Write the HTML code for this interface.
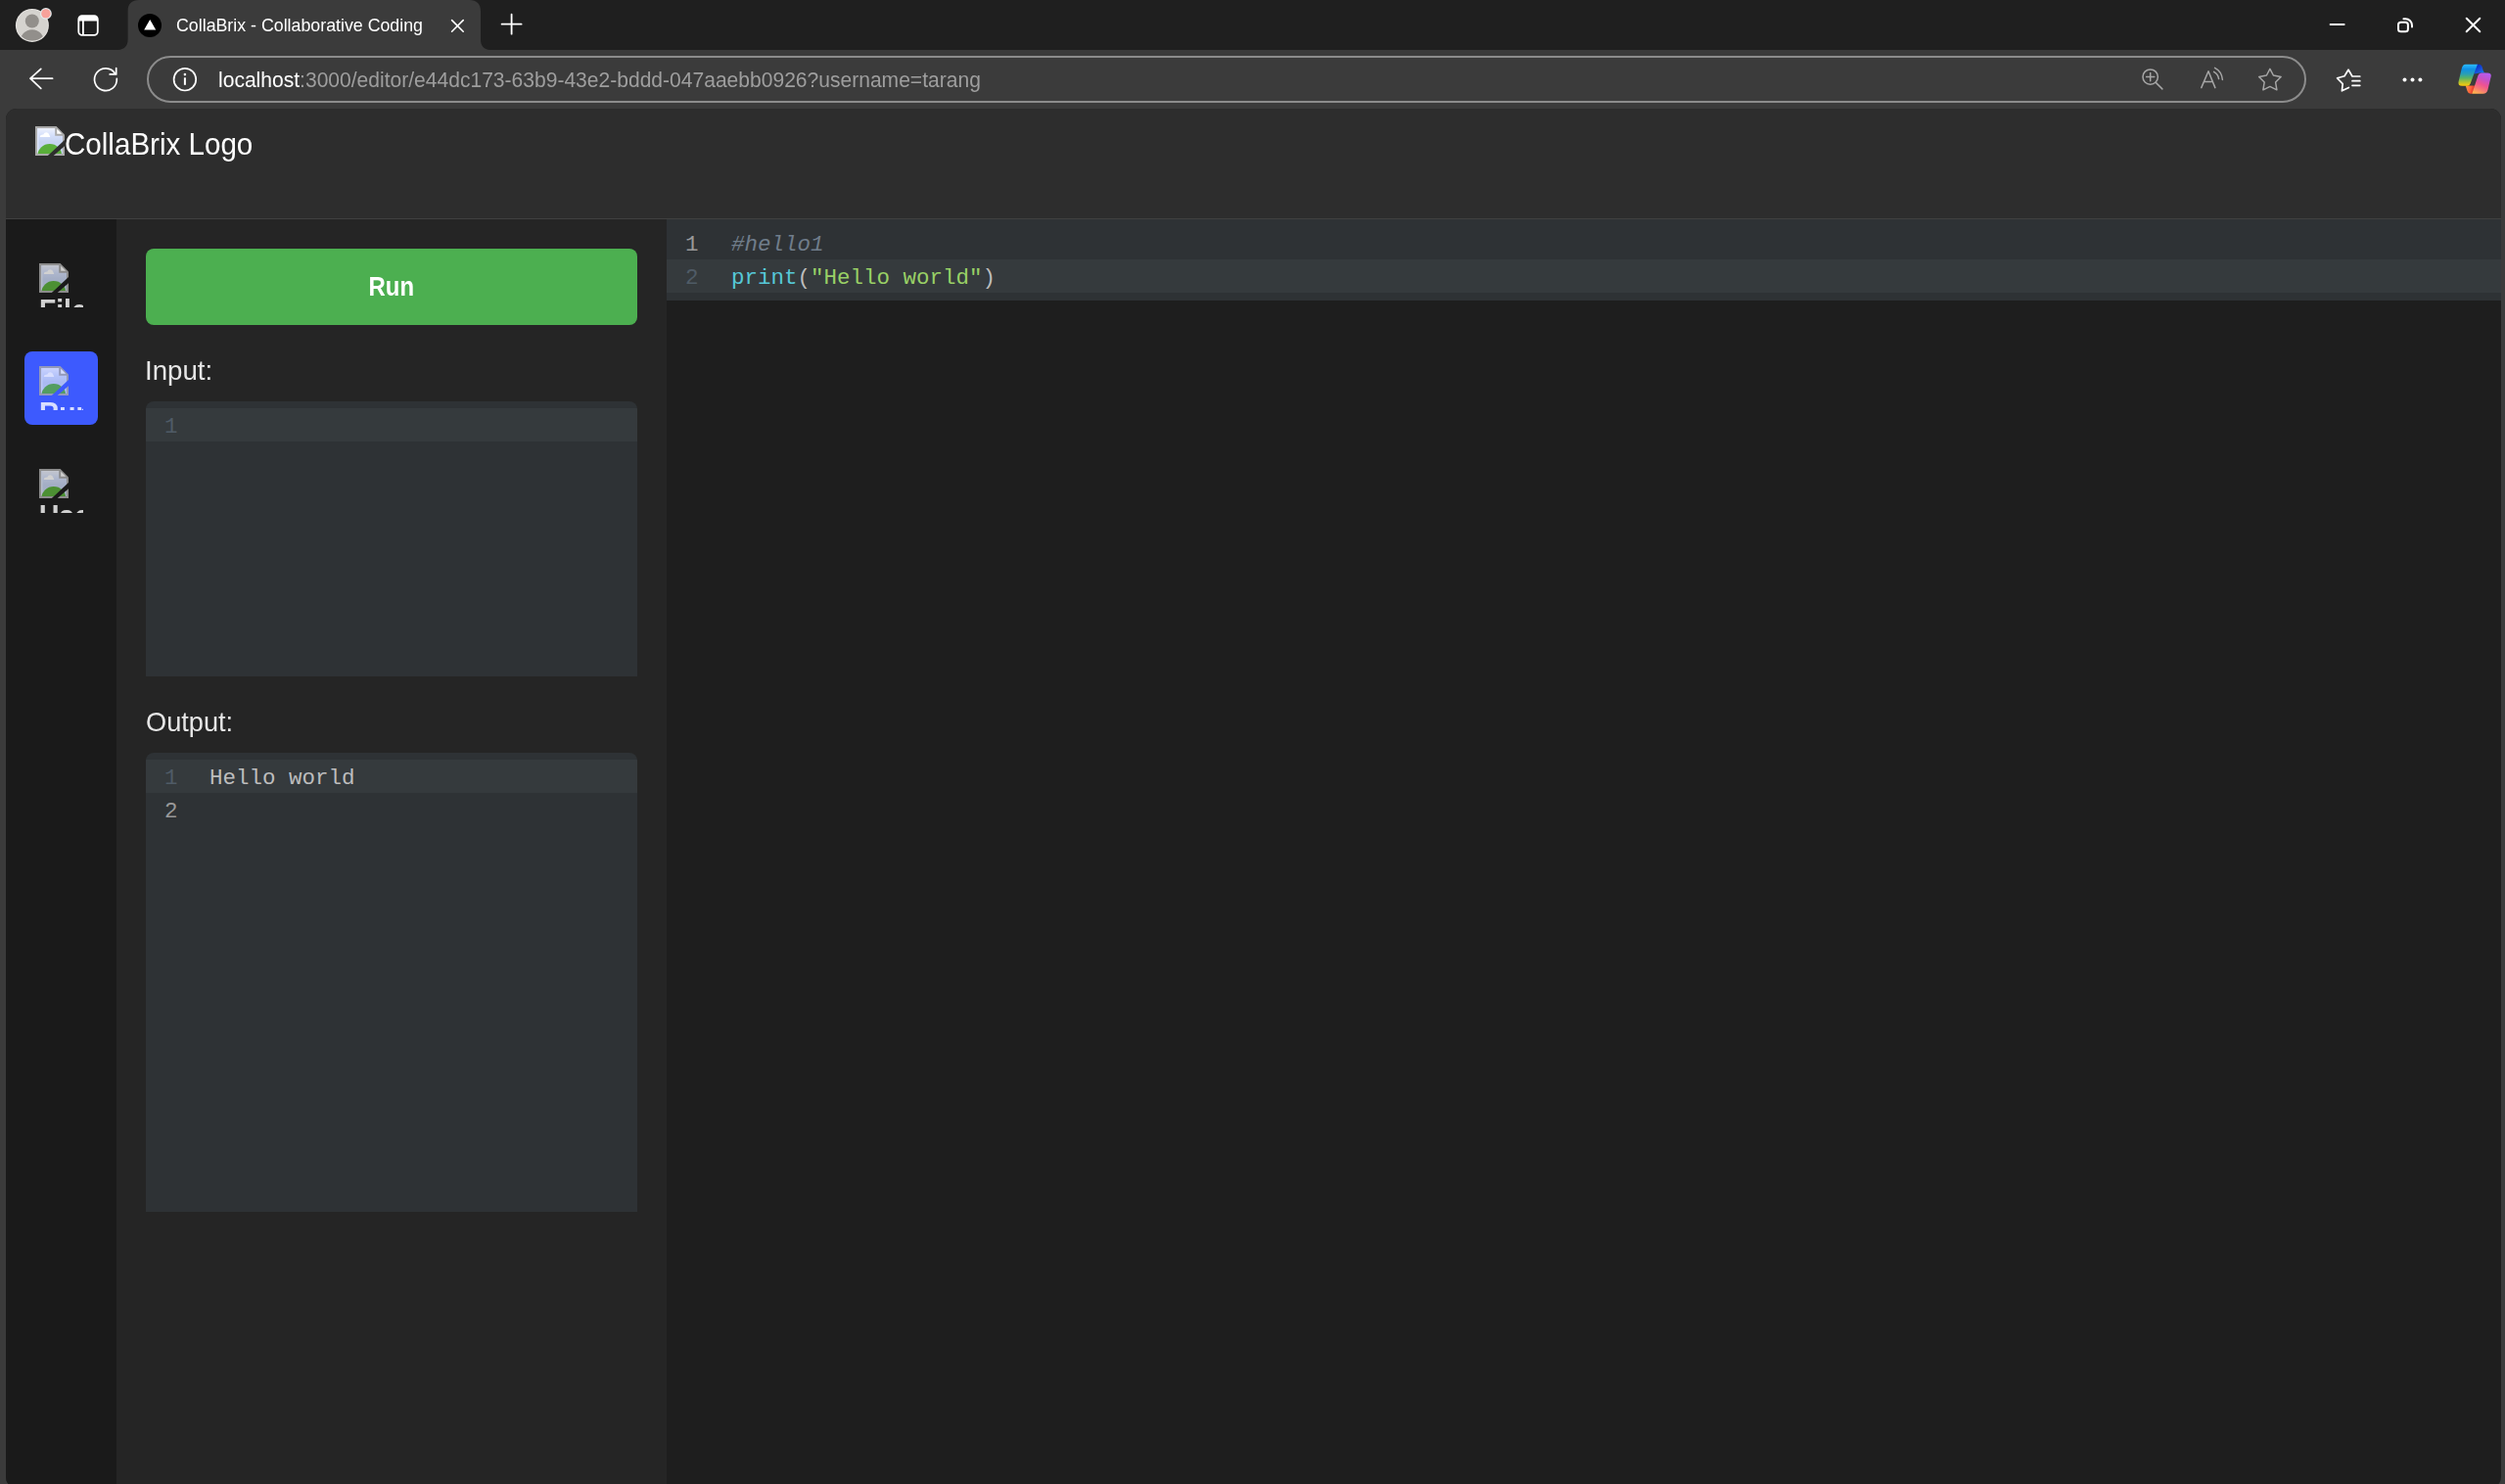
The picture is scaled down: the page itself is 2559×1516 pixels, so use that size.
<!DOCTYPE html>
<html>
<head>
<meta charset="utf-8">
<title>CollaBrix - Collaborative Coding</title>
<style>
html,body{margin:0;padding:0;}
html{width:2559px;height:1516px;overflow:hidden;}
body{width:2559px;height:1516px;overflow:hidden;position:relative;background:#3b3b3b;font-family:"Liberation Sans",sans-serif;color:#fff;}
.a{position:absolute;}
svg{position:absolute;overflow:visible;}
/* ---------- browser chrome ---------- */
#tabstrip{left:0;top:0;width:2559px;height:51px;background:#1f1f1f;}
#tabtitle{left:180px;top:14px;font-size:18.5px;line-height:24px;color:#fff;white-space:nowrap;transform-origin:0 0;transform:scaleX(.961);}
#pill{left:150px;top:57px;width:2202px;height:43.5px;border:2px solid #8c8c8c;border-radius:24px;background:#3b3b3b;}
#url{left:223px;top:68px;font-size:21.4px;line-height:28px;color:#9e9e9e;white-space:nowrap;transform-origin:0 0;transform:scaleX(.984);}
#url b{font-weight:normal;color:#fff;}
/* ---------- page ---------- */
#page{left:6px;top:111px;width:2548.5px;height:1405px;overflow:hidden;}
#pagein{left:0;top:0;width:2548.5px;height:1409px;border-radius:11px;overflow:hidden;background:#1e1e1e;}
#hdr{left:0;top:0;width:2549px;height:112px;background:#2d2d2d;border-bottom:2px solid #404040;}
#logotxt{left:60px;top:16px;font-size:32px;line-height:40px;white-space:nowrap;color:#fff;transform-origin:0 0;transform:scaleX(.924);}
#side{left:0;top:113px;width:113px;height:1320px;background:#1a1a1a;}
.sb{left:19px;width:75px;height:75px;border-radius:8px;}
.sb .ic{left:15px;top:15px;width:45px;height:45px;overflow:hidden;opacity:.8;}
.sb .alt{left:0;top:31.7px;font-weight:bold;font-size:31px;line-height:34px;white-space:nowrap;color:#fff;transform-origin:0 0;transform:scaleX(.91);}
#panel{left:113px;top:113px;width:562px;height:1320px;background:#252525;}
#run{left:30px;top:30px;width:502px;height:78px;border-radius:8px;background:#4caf50;color:#fff;font-weight:bold;font-size:27.6px;line-height:78px;text-align:center;}
#run span{display:inline-block;transform:scaleX(.867);}
.lbl{left:30px;font-size:27.8px;line-height:32px;color:#e6e6e6;white-space:nowrap;transform-origin:0 0;}
.box{left:30px;width:502px;background:#2e3235;border-radius:8px 8px 0 0;overflow:hidden;}
.ln{left:0;width:100%;height:34px;}
.act{background:#353a3d;}
.mono{font-family:"Liberation Mono",monospace;font-size:22.5px;line-height:34px;white-space:pre;margin-top:2px;}
.num{color:#999;}
.numa{color:#4f5b66;}
#ed{left:675px;top:113px;width:1874px;height:83px;background:#2e3235;}
</style>
</head>
<body>

<!-- ================= TAB STRIP ================= -->
<div id="tabstrip" class="a"></div>
<svg id="tabshape" style="left:0;top:0" width="2559" height="51" viewBox="0 0 2559 51">
  <path d="M120.5 51 C127 50.6 130.6 47 130.6 40.5 V11.5 C130.6 4 134.5 0 142 0 H479.6 C487 0 491 4 491 11.5 V40.5 C491 47 494.5 50.6 500.5 51 Z" fill="#3b3b3b"/>
</svg>
<div id="tabtitle" class="a">CollaBrix - Collaborative Coding</div>

<!-- ================= TOOLBAR ================= -->
<div id="pill" class="a"></div>
<div id="url" class="a"><b>localhost</b>:3000/editor/e44dc173-63b9-43e2-bddd-047aaebb0926?username=tarang</div>


<!-- ================= CHROME ICONS ================= -->
<svg id="chromeicons" style="left:0;top:0" width="2559" height="111" viewBox="0 0 2559 111" fill="none">
  <defs>
    <clipPath id="avc"><circle cx="32.9" cy="25.9" r="15.6"/></clipPath>
    <linearGradient id="cpL" x1="0" y1="65.8" x2="0" y2="87.8" gradientUnits="userSpaceOnUse">
      <stop offset="0" stop-color="#2cbcff"/><stop offset=".22" stop-color="#0f90e6"/><stop offset=".45" stop-color="#2a9fb4"/><stop offset=".62" stop-color="#55b268"/><stop offset=".8" stop-color="#a6c038"/><stop offset=".93" stop-color="#e2c816"/><stop offset="1" stop-color="#ffc80a"/>
    </linearGradient>
    <linearGradient id="cpR" x1="2540" y1="74.4" x2="2531" y2="95.8" gradientUnits="userSpaceOnUse">
      <stop offset="0" stop-color="#b35cf2"/><stop offset=".3" stop-color="#c652c6"/><stop offset=".55" stop-color="#ee5292"/><stop offset=".78" stop-color="#f67a74"/><stop offset="1" stop-color="#ffb050"/>
    </linearGradient>
    <linearGradient id="cpT" x1="2531" y1="66" x2="2537" y2="75" gradientUnits="userSpaceOnUse">
      <stop offset="0" stop-color="#0a2cc2"/><stop offset=".6" stop-color="#1a55dc"/><stop offset="1" stop-color="#0f86f0"/>
    </linearGradient>
    <linearGradient id="cpB" x1="2519" y1="90" x2="2527.5" y2="92" gradientUnits="userSpaceOnUse">
      <stop offset="0" stop-color="#ff9448"/><stop offset=".6" stop-color="#fb5c38"/><stop offset="1" stop-color="#d8302a"/>
    </linearGradient>
  </defs>

  <!-- profile avatar -->
  <circle cx="32.9" cy="25.9" r="17" fill="#e4e2df"/>
  <circle cx="32.9" cy="25.9" r="15.8" fill="#d5d3cf"/>
  <g clip-path="url(#avc)">
    <circle cx="32.8" cy="21.5" r="7" fill="#928f8b"/>
    <ellipse cx="32.8" cy="43.3" rx="12.6" ry="13" fill="#928f8b"/>
  </g>
  <circle cx="46.9" cy="13.9" r="5.9" fill="#e3ecee"/>
  <circle cx="46.9" cy="13.9" r="4.7" fill="#f7a19a"/>

  <!-- tab actions -->
  <rect x="80.3" y="16.1" width="19.5" height="19.7" rx="3.6" stroke="#fff" stroke-width="1.8"/>
  <path d="M80.3 21.4V19.7a3.6 3.6 0 0 1 3.6-3.6h12.3a3.6 3.6 0 0 1 3.6 3.6V21.4Z" fill="#fff"/>
  <path d="M84.9 21V35.6" stroke="#fff" stroke-width="1.8"/>

  <!-- favicon -->
  <circle cx="153" cy="25.9" r="12" fill="#000"/>
  <path d="M153.2 20L159.2 30.4H147.2Z" fill="#fff"/>

  <!-- tab close -->
  <path d="M461.6 20.6L473.2 32.2M473.2 20.6L461.6 32.2" stroke="#fff" stroke-width="1.6" stroke-linecap="round"/>
  <!-- new tab -->
  <path d="M512.6 24.7H532.6M522.6 14.7V34.7" stroke="#fff" stroke-width="1.8" stroke-linecap="round"/>

  <!-- window controls -->
  <path d="M2380.6 25H2394.6" stroke="#fff" stroke-width="2" stroke-linecap="round"/>
  <rect x="2450" y="22.7" width="9.9" height="9.6" rx="2.6" stroke="#fff" stroke-width="2"/>
  <path d="M2455.4 19.3H2457.4a6.6 6.6 0 0 1 6.6 6.6V27.6" stroke="#fff" stroke-width="2" stroke-linecap="round"/>
  <path d="M2519.7 18.7L2533.3 32.3M2533.3 18.7L2519.7 32.3" stroke="#fff" stroke-width="2" stroke-linecap="round"/>

  <!-- back -->
  <path d="M53.6 80.2H31M41.8 70.3L31 80.2L41.8 90.4" stroke="#fff" stroke-width="1.7" stroke-linecap="round" stroke-linejoin="round"/>
  <!-- refresh -->
  <path d="M119.3 80.4A11.4 11.4 0 1 1 117.6 75.2" stroke="#fff" stroke-width="1.7" stroke-linecap="round"/>
  <path d="M118.7 69.6V75.9H112.2" stroke="#fff" stroke-width="1.7" stroke-linecap="round" stroke-linejoin="round"/>
  <!-- info -->
  <circle cx="188.9" cy="81.2" r="11.3" stroke="#fff" stroke-width="1.7"/>
  <circle cx="188.9" cy="76.1" r="1.3" fill="#fff"/>
  <path d="M188.9 79.3V86.8" stroke="#fff" stroke-width="2" stroke-linecap="butt"/>

  <!-- zoom -->
  <g stroke="#a6a6a6" stroke-width="1.5" stroke-linecap="round" stroke-linejoin="round">
    <circle cx="2196.7" cy="78.6" r="7.7"/>
    <path d="M2192.6 78.6H2200.8M2196.7 74.6V82.7M2202.3 84.4L2208.9 90.9"/>
    <!-- read aloud -->
    <path d="M2248.8 89.6L2256 72.8L2262.9 89.6M2251.6 83.6H2260.3"/>
    <path d="M2261.6 73.4Q2266 76 2266.6 80.6M2262.6 69.4Q2269.6 73 2270.4 81.4"/>
    <!-- star -->
    <path d="M2318.9 70.4L2322.4 77L2330.1 78.5L2324.6 84L2325.9 91.8L2318.9 88.4L2311.9 91.8L2313.2 84L2307.7 78.5L2315.4 77Z"/>
  </g>

  <!-- favorites -->
  <g stroke="#fff" stroke-width="1.7" stroke-linecap="round" stroke-linejoin="round">
    <path d="M2410.8 78H2403L2399 71.2L2395 77.8L2387.6 79.8L2393.2 85.6L2392.4 92.8L2399.4 89.4"/>
    <path d="M2403 82.7H2410.8M2403 87.3H2410.8"/>
  </g>
  <!-- dots -->
  <circle cx="2456.5" cy="81.6" r="2" fill="#fff"/><circle cx="2464.5" cy="81.6" r="2" fill="#fff"/><circle cx="2472.4" cy="81.6" r="2" fill="#fff"/>

  <!-- copilot -->
  <path d="M2529.6 65.8H2532.4Q2535 65.8 2535.8 68.8L2536.7 72.2Q2537.3 74.4 2539.8 74.4H2533L2527.4 75.4Z" fill="url(#cpT)"/>
  <path d="M2518.8 87.4H2528.6L2525.6 95.8H2523.8Q2521.4 95.8 2520.5 93Z" fill="url(#cpB)"/>
  <path d="M2518.8 65.8H2530.9L2523.7 85.2Q2522.8 87.8 2520.2 87.8H2515.2Q2510.5 87.8 2511.6 83.2L2514.7 70.2Q2515.8 65.8 2518.8 65.8Z" fill="url(#cpL)"/>
  <path d="M2534.8 74.4H2541.2Q2545.5 74.4 2544.6 78.4L2541.5 91.4Q2540.3 95.8 2536.6 95.8H2525.3L2531.5 77Q2532.3 74.4 2534.8 74.4Z" fill="url(#cpR)"/>
</svg>


<!-- broken-image icon symbol -->
<svg width="0" height="0" style="left:0;top:0">
  <defs>
    <linearGradient id="bsky" x1="0" y1="0" x2="0" y2="1">
      <stop offset="0" stop-color="#eef2fd"/><stop offset=".3" stop-color="#d3defa"/><stop offset=".55" stop-color="#c6d3f0"/><stop offset="1" stop-color="#c9d6f2"/>
    </linearGradient>
    <mask id="bslash" maskUnits="userSpaceOnUse" x="0" y="0" width="30" height="30">
      <rect x="0" y="0" width="30" height="30" fill="#fff"/>
      <path d="M31 12.96V19.33L17.55 31H11.84Z" fill="#000"/>
    </mask>
    <clipPath id="bin"><path d="M2 2H20.2V9.8H28V28H2Z"/></clipPath>
    <symbol id="broken" viewBox="0 0 30 30">
      <g mask="url(#bslash)">
        <path d="M0 0H21.6L30 8.4V30H0Z" fill="#a9a9a9"/>
        <path d="M2 2H20.2V9.8H28V28H2Z" fill="url(#bsky)"/>
        <g clip-path="url(#bin)">
          <path d="M2 2H3.4V28H2Z" fill="#dfe7fb"/>
          <ellipse cx="14.8" cy="29.6" rx="12.4" ry="11.6" fill="#59ae3a"/>
          <path d="M4.6 10.9Q5 8.4 8.2 8.6Q9.8 5.6 12.4 6.6Q14.4 7.4 14.6 9.6Q15.6 10 15 10.9Z" fill="#fff"/>
        </g>
        <path d="M22.2 2.8V7.8H27.2Z" fill="#fff"/>
      </g>
    </symbol>
  </defs>
</svg>

<!-- ================= PAGE ================= -->
<div id="page" class="a"><div id="pagein" class="a">
  <div id="hdr" class="a"></div>
  <svg style="left:30px;top:18px" width="30" height="30"><use href="#broken"/></svg>
  <div id="logotxt" class="a">CollaBrix Logo</div>

  <div id="side" class="a">
    <div class="a sb" style="top:30px"><div class="a ic"><svg style="left:0;top:0" width="30" height="30"><use href="#broken"/></svg><div id="t_alt1" class="a alt">Files</div></div></div>
    <div class="a sb" style="top:135px;background:#3d5afe"><div class="a ic"><svg style="left:0;top:0" width="30" height="30"><use href="#broken"/></svg><div id="t_alt2" class="a alt">Run</div></div></div>
    <div class="a sb" style="top:240px"><div class="a ic"><svg style="left:0;top:0" width="30" height="30"><use href="#broken"/></svg><div id="t_alt3" class="a alt">Users</div></div></div>
  </div>

  <div id="panel" class="a">
    <div id="run" class="a"><span id="t_run">Run</span></div>
    <div id="t_in" class="a lbl" style="top:139px;left:29px;transform:scaleX(.995)">Input:</div>
    <div class="a box" style="top:186px;height:281px">
      <div class="a ln act" style="top:7px"></div>
      <div id="m_in1" class="a mono numa" style="left:19px;top:7px">1</div>
    </div>
    <div id="t_out" class="a lbl" style="top:498px;left:29.5px;transform:scaleX(.978)">Output:</div>
    <div class="a box" style="top:545px;height:469px">
      <div class="a ln act" style="top:7px"></div>
      <div class="a mono numa" style="left:19px;top:7px">1</div>
      <div id="m_hello" class="a mono" style="left:65px;top:7px;color:#bdbdbd">Hello world</div>
      <div class="a mono num" style="left:19px;top:41px">2</div>
    </div>
  </div>

  <div id="ed" class="a">
    <div class="a ln act" style="top:41px"></div>
    <div class="a mono num" style="left:19px;top:7px">1</div>
    <div class="a mono numa" style="left:19px;top:41px">2</div>
    <div id="m_l1" class="a mono" style="left:66px;top:7px;color:#707d8b;font-style:italic">#hello1</div>
    <div id="m_l2" class="a mono" style="left:66px;top:41px;color:#bdbdbd"><span style="color:#56c8d8">print</span>(<span style="color:#99d066">"Hello world"</span>)</div>
  </div>
</div></div>

</body>
</html>
